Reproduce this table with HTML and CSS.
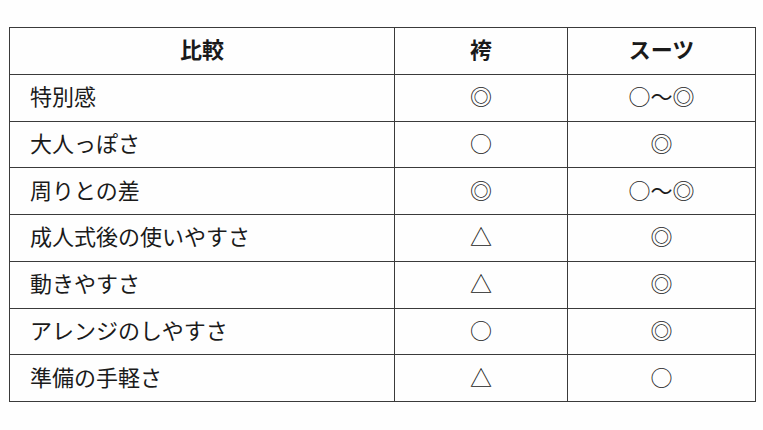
FILE: index.html
```html
<!DOCTYPE html>
<html lang="ja">
<head>
<meta charset="utf-8">
<link rel="stylesheet" href="styles.css">
</head>
<body>
<table class="cmp">
  <thead>
    <tr><th class="c1">比較</th><th class="c2">袴</th><th class="c3">スーツ</th></tr>
  </thead>
  <tbody>
    <tr><td class="lbl">特別感</td><td class="sym">◎</td><td class="sym">○〜◎</td></tr>
    <tr><td class="lbl">大人っぽさ</td><td class="sym">○</td><td class="sym">◎</td></tr>
    <tr><td class="lbl">周りとの差</td><td class="sym">◎</td><td class="sym">○〜◎</td></tr>
    <tr><td class="lbl">成人式後の使いやすさ</td><td class="sym">△</td><td class="sym">◎</td></tr>
    <tr><td class="lbl">動きやすさ</td><td class="sym">△</td><td class="sym">◎</td></tr>
    <tr><td class="lbl">アレンジのしやすさ</td><td class="sym">○</td><td class="sym">◎</td></tr>
    <tr><td class="lbl">準備の手軽さ</td><td class="sym">△</td><td class="sym">○</td></tr>
  </tbody>
</table>
</body>
</html>
```
FILE: styles.css
```css
html, body {
  margin: 0;
  padding: 0;
  background: #fefefe;
}
body {
  padding: 27px 8px 0 9px;
  font-family: "Noto Sans CJK JP", "Noto Sans", sans-serif;
  color: #1a1a1a;
}
.cmp {
  border-collapse: collapse;
  width: 746px;
  table-layout: fixed;
}
.cmp th, .cmp td {
  border: 1.3px solid #3a3a3a;
  height: 46.75px;
  padding: 0 0 5px 0;
  box-sizing: border-box;
  line-height: 1;
}
.cmp th {
  font-weight: 700;
  font-size: 22px;
  text-align: center;
}
.c1 { width: 385px; }
.c2 { width: 173px; }
.c3 { width: 188px; }
.cmp .lbl {
  font-size: 22px;
  padding-left: 20px;
  text-align: left;
}
.sym {
  text-align: center;
  font-size: 22px;
}
```
